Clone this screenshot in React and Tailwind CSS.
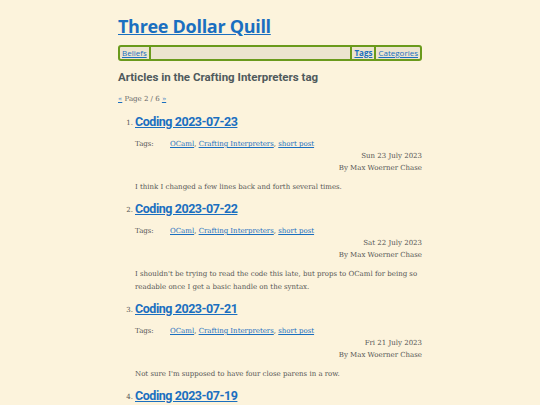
import React from "react";

const posts = [
  {
    n: 1,
    title: "Coding 2023-07-23",
    date: "Sun 23 July 2023",
    body: "I think I changed a few lines back and forth several times.",
  },
  {
    n: 2,
    title: "Coding 2023-07-22",
    date: "Sat 22 July 2023",
    body: "I shouldn't be trying to read the code this late, but props to OCaml for being so readable once I get a basic handle on the syntax.",
  },
  {
    n: 3,
    title: "Coding 2023-07-21",
    date: "Fri 21 July 2023",
    body: "Not sure I'm supposed to have four close parens in a row.",
  },
  {
    n: 4,
    title: "Coding 2023-07-19",
    date: "Wed 19 July 2023",
    body: "More tinkering.",
  },
];

const heading = { fontFamily: '"Open Sans", "Noto Sans", sans-serif' };
const narrow = { fontFamily: 'Roboto, "Open Sans", sans-serif' };
const serif = { fontFamily: '"DejaVu Serif", "Liberation Serif", serif' };

function Post({ post }) {
  return (
    <li className="flex">
      <span className="w-[17px] shrink-0 text-right pr-[2px] pt-[6px] text-[7px] text-[#555]" style={serif}>
        {post.n}.
      </span>
      <div className="flex-1">
        <a
          href="#"
          className="block text-[12.5px] leading-[20px] font-bold text-[#1a6fc0] underline tracking-[-0.45px]"
          style={narrow}
        >
          {post.title}
        </a>
        <div className="mt-[6px] flex text-[7px] leading-[12px] text-[#555]" style={serif}>
          <span className="w-[35px]">Tags:</span>
          <span>
            <a href="#" className="text-[#1a6fc0] underline">OCaml</a>,{" "}
            <a href="#" className="text-[#1a6fc0] underline">Crafting Interpreters</a>,{" "}
            <a href="#" className="text-[#1a6fc0] underline">short post</a>
          </span>
        </div>
        <div className="text-right text-[7px] leading-[12px] text-[#555]" style={serif}>
          <div>{post.date}</div>
          <div>By Max Woerner Chase</div>
        </div>
        <p className="mt-[7px] mb-[5px] text-[7px] leading-[13px] text-[#555]" style={serif}>
          {post.body}
        </p>
      </div>
    </li>
  );
}

export default function App() {
  return (
    <div className="min-h-screen bg-[#fcf3dc] pt-[14px]">
      <div className="mx-auto w-[304px]">
        <a
          href="#"
          className="block text-[18px] leading-[24px] font-bold text-[#1a6fc0] underline tracking-[-0.3px]"
          style={heading}
        >
          Three Dollar Quill
        </a>
        <nav
          className="mt-[7px] flex items-stretch h-[16px] rounded-[3px] border-2 border-[#6a9a1c] bg-[#ece4cf] text-[8px] leading-[12px]"
          style={heading}
        >
          <a href="#" className="px-[2px] text-[#1a6fc0] underline border-r-2 border-[#6a9a1c]">
            Beliefs
          </a>
          <span className="flex-1" />
          <a href="#" className="px-[2px] font-bold text-[#1a6fc0] underline border-x-2 border-[#6a9a1c]">
            Tags
          </a>
          <a href="#" className="px-[2px] text-[#1a6fc0] underline">
            Categories
          </a>
        </nav>
        <h1 className="mt-[7px] text-[11.5px] leading-[18px] font-bold text-[#4f5a5c]" style={narrow}>
          Articles in the Crafting Interpreters tag
        </h1>
        <div className="mt-[8px] text-[7px] leading-[10px] text-[#666]" style={serif}>
          <a href="#" className="text-[#1a6fc0] underline">«</a> Page 2 / 6{" "}
          <a href="#" className="text-[#1a6fc0] underline">»</a>
        </div>
        <ol className="mt-[8px]">
          {posts.map((p) => (
            <Post key={p.n} post={p} />
          ))}
        </ol>
      </div>
    </div>
  );
}
